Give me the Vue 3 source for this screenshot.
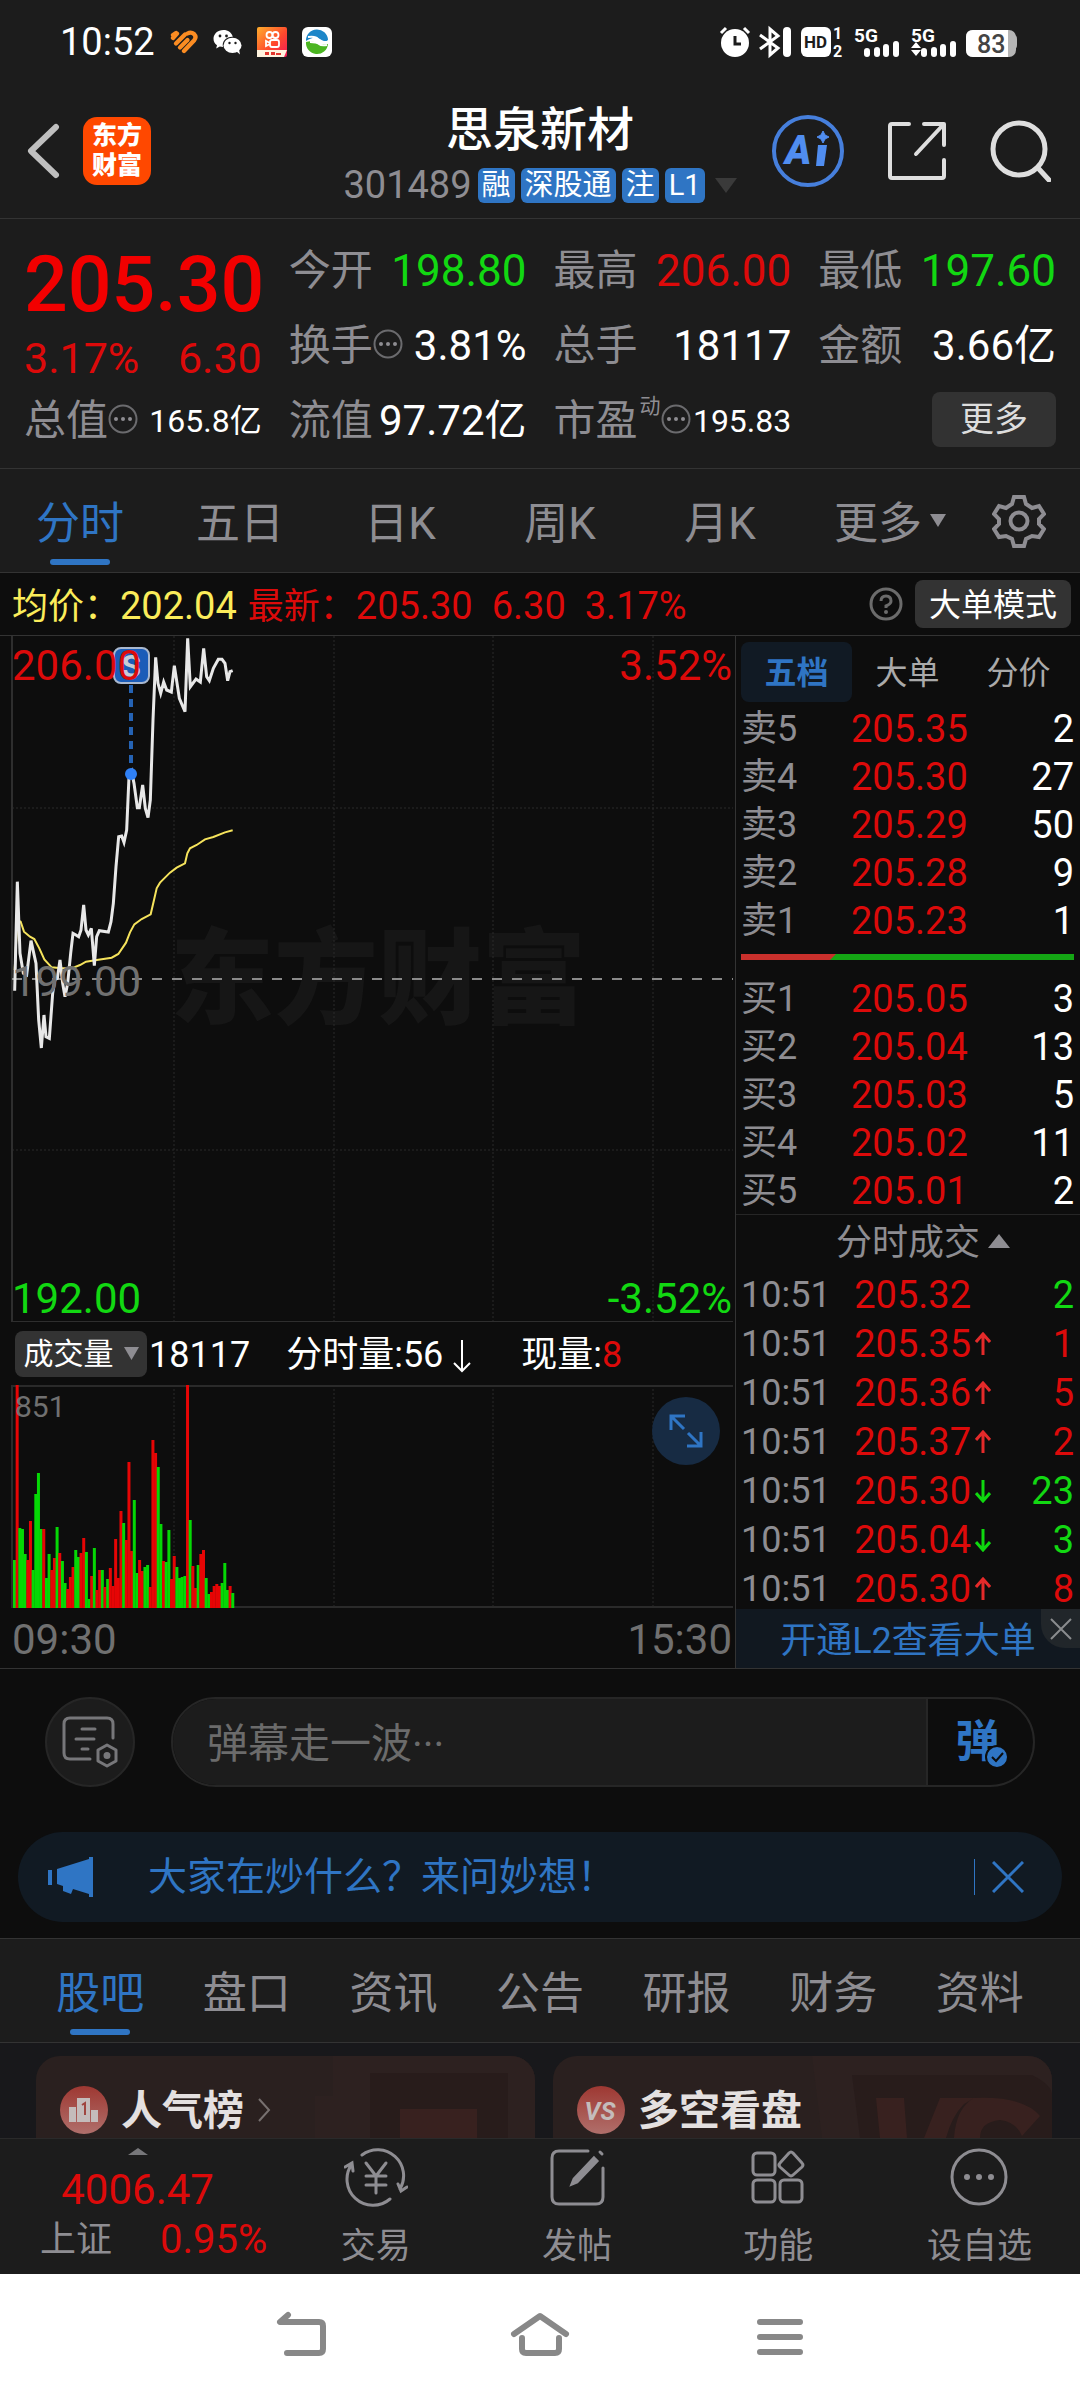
<template>
  <div class="page">
    <header class="top">
      <div class="status">
        <div class="status-left">
          <span class="clock">10:52</span>
          <svg width="28" height="24" viewBox="0 0 28 24" fill="none" stroke="#fb8c22" stroke-width="4.300" stroke-linecap="round" stroke-linejoin="round">
            <path d="M3 8 7 3.500M3 5 6 3" />
            <path d="M6 13.500 15 4.500" />
            <path d="M10 17.500 17.500 10" />
            <path d="M14 21 24 10.500Q27 7 24 4Q21 1.500 17.500 3.500" />
          </svg>
          <svg width="29" height="26" viewBox="0 0 29 26">
            <path fill="#fff" d="M10.500 1C4.500 1 .5 5 .5 9.800c0 2.700 1.300 5 3.500 6.500l-.8 3.200 3.600-1.900c1 .3 2.200.4 3.200.4-1.500-6 3.500-10.600 9.800-10.300C18.700 3.600 15 1 10.500 1Z" />
            <ellipse cx="19.500" cy="16.400" rx="9" ry="7.700" fill="#fff" />
            <path fill="#fff" d="m23 22 4 3.500-1-5Z" />
            <g fill="#1c1c1c"><circle cx="7" cy="7" r="1.400" /><circle cx="13.500" cy="7" r="1.400" /><circle cx="16.500" cy="14" r="1.200" /><circle cx="22.500" cy="14" r="1.200" /></g>
          </svg>
          <svg width="30" height="30" viewBox="0 0 30 30">
            <defs>
              <linearGradient id="ks" x1="0" y1="0" x2="1" y2="1"><stop offset="0" stop-color="#ffae2c" /><stop offset=".55" stop-color="#ff4a2d" /><stop offset="1" stop-color="#f41858" /></linearGradient>
            </defs>
            <rect width="30" height="30" rx="2" fill="url(#ks)" />
            <g fill="none" stroke="#fff" stroke-width="1.800"><circle cx="12.500" cy="8" r="3" /><circle cx="18.500" cy="8" r="3" /><rect x="13" y="13" width="9" height="7" rx="2" /><path d="m13 16-4-2v5l4-2" /></g>
            <path d="M0 23h30l-3 7H0Z" fill="#fff3df" />
            <path d="M8 25h4v3H8Zm6 0h4v3h-4Zm5 1h5v2h-5Z" fill="#e2372e" />
          </svg>
          <svg width="30" height="30" viewBox="0 0 30 30">
            <rect width="30" height="30" rx="6" fill="#fff" />
            <path d="M4 14a11 11 0 0 1 22-1q-3 3-8-1t-14 2Z" fill="#1c86c8" />
            <path d="M4 15q6-2 10 1t12 1A11 11 0 0 1 4 15Z" fill="#4bb521" />
            <path d="M6 10q8-1 10 2t9 3M8 15q7 0 9 2t8 1" fill="none" stroke="#fff" stroke-width="1.800" />
          </svg>
        </div>
        <svg class="status-right" width="300" height="32" viewBox="0 0 300 32">
          <g fill="#fff">
            <circle cx="15" cy="17" r="14" />
            <path d="m1 7 5-5M29 7l-5-5" stroke="#fff" stroke-width="3" />
            <path d="M15 10v8h6" stroke="#1c1c1c" stroke-width="3" fill="none" />
            <path d="m40 9 18 13-8 7V3l8 7-18 13" fill="none" stroke="#fff" stroke-width="3" />
            <rect x="63" y="1" width="8" height="30" rx="4" />
            <rect x="81" y="1" width="30" height="30" rx="6" />
            <text x="84" y="22" class="hd">HD</text>
            <text x="113" y="13" class="tiny">1</text>
            <text x="113" y="31" class="tiny">2</text>
            <text x="134" y="16" class="net">5G</text>
            <text x="191" y="16" class="net">5G</text>
            <g v-for="x in [144, 201]" :key="x">
              <rect :x="x" y="22" width="6" height="9" rx="3" />
              <rect :x="x + 10" y="21" width="6" height="10" rx="3" />
              <rect :x="x + 19" y="18" width="6" height="13" rx="3" />
              <rect :x="x + 29" y="15" width="6" height="16" rx="3" />
            </g>
            <path d="m191 22 5-6 5 6Zm0 2 5 6 5-6Z" />
          </g>
          <path d="M289 9h5q3 0 3 4v6q0 4-3 4h-5Z" fill="#b5b5b5" />
          <rect x="246" y="4" width="50" height="27" rx="7" fill="#b5b5b5" />
          <path d="M253 4h35v27h-35q-7 0-7-7V11q0-7 7-7Z" fill="#fff" />
          <text x="257" y="27" class="batt">83</text>
        </svg>
      </div>

      <div class="head">
        <div class="head-side">
          <button class="icon-btn" aria-label="返回">
            <svg width="34" height="58" viewBox="0 0 34 58"><path d="M30 5 5 29l25 24" fill="none" stroke="#bfbfbf" stroke-width="6" stroke-linecap="round" stroke-linejoin="round" /></svg>
          </button>
          <div class="logo">东方<br>财富</div>
        </div>
        <div class="head-title">
          <h1>思泉新材</h1>
          <div class="code">
            <span class="code-num">301489</span>
            <span v-for="t in tags" :key="t" class="tag">{{ t }}</span>
            <svg class="code-arrow" width="22" height="15" viewBox="0 0 22 15"><path d="M0 0h22L11 15Z" fill="#3a3a3a" /></svg>
          </div>
        </div>
        <div class="head-side right">
          <button class="icon-btn" aria-label="AI">
            <svg width="74" height="74" viewBox="0 0 74 74">
              <circle cx="37" cy="37" r="34" fill="none" stroke="#467fdc" stroke-width="4" />
              <text x="14" y="50" class="ai">A</text>
              <path d="M47 31h9l-3 21h-8Z" fill="#508df0" />
              <path d="m52 17 2 4 4 2-4 2-2 4-2-4-4-2 4-2Z" fill="#508df0" stroke="#508df0" />
            </svg>
          </button>
          <button class="icon-btn" aria-label="分享">
            <svg width="60" height="60" viewBox="0 0 60 60" fill="none" stroke="#dedede" stroke-width="4" stroke-linecap="round" stroke-linejoin="round">
              <path d="M22 3H5Q3 3 3 5v50q0 2 2 2h50q2 0 2-2V39M37 3h20v21M56 4 29 33" />
            </svg>
          </button>
          <button class="icon-btn" aria-label="搜索">
            <svg width="62" height="62" viewBox="0 0 62 62" fill="none" stroke="#dedede" stroke-width="5" stroke-linecap="round">
              <circle cx="30" cy="29" r="26" /><path d="m49 48 11 12" />
            </svg>
          </button>
        </div>
      </div>
    </header>

    <section class="quote">
      <div class="q-main">
        <strong>205.30</strong>
        <div class="q-change"><span>3.17%</span><span>6.30</span></div>
      </div>
      <div v-for="q in quotes" :key="q.label" class="q-item">
        <span class="q-label">{{ q.label }}<sup v-if="q.sup">{{ q.sup }}</sup></span>
        <svg v-if="q.info" class="q-info" width="30" height="30" viewBox="0 0 30 30">
          <circle cx="15" cy="15" r="13.500" fill="none" stroke="#6b6b6e" stroke-width="2" />
          <g fill="#8e8d92"><circle cx="8" cy="15" r="2" /><circle cx="15" cy="15" r="2" /><circle cx="22" cy="15" r="2" /></g>
        </svg>
        <span class="q-value" :class="[q.color, q.size]">{{ q.value }}</span>
      </div>
      <div class="q-item end"><button class="more">更多</button></div>
    </section>

    <nav class="periods">
      <button v-for="(p, i) in periods" :key="p" class="tab" :class="{ active: i === 0 }">
        {{ p }}<svg v-if="p === '更多'" class="tab-arrow" width="16" height="13" viewBox="0 0 16 13"><path d="M0 0h16L8 13Z" fill="#8e8d92" /></svg>
      </button>
      <button class="gear" aria-label="设置">
        <svg width="54" height="54" viewBox="0 0 54 54" fill="none" stroke="#8e8d92" stroke-width="4">
          <circle cx="27" cy="27" r="8.500" />
          <path d="M22 3h10l2 7 6 4 7-2 5 8-5 5v5l5 5-5 8-7-1-6 3-2 7H22l-2-7-6-3-7 1-5-8 5-5v-5l-5-5 5-8 7 2 6-4Z" />
        </svg>
      </button>
    </nav>

    <section class="legend">
      <span class="avg">均价：<b>202.04</b></span>
      <span class="last">最新：<b>205.30</b></span>
      <b class="last">6.30</b>
      <b class="last">3.17%</b>
      <svg class="help" width="34" height="34" viewBox="0 0 34 34">
        <circle cx="17" cy="17" r="15" fill="none" stroke="#6b6b6b" stroke-width="3" />
        <path d="M12 14q0-5 5-5t5 5q0 3-5 5v2" fill="none" stroke="#6b6b6b" stroke-width="3" />
        <circle cx="17" cy="25" r="2" fill="#6b6b6b" />
      </svg>
      <button class="big-mode">大单模式</button>
    </section>

    <main class="board">
      <div class="charts">
        <div class="price">
          <svg viewBox="0 0 735 686">
            <text x="170" y="380" class="watermark">东方财富</text>
            <g stroke="#2a2a2a" stroke-dasharray="2 2">
              <path v-for="x in gridX" :key="x" :d="`M${x} 0V686`" />
              <path d="M12 172H733M12 514H733" />
            </g>
            <path d="M12 0V686H733" fill="none" stroke="#2e2e2e" stroke-width="2" />
            <path d="M12 343H733" stroke="#8a8a8a" stroke-width="2" stroke-dasharray="10 10" />
            <polyline :points="avgLine" fill="none" stroke="#f5e35c" stroke-width="2" />
            <polyline :points="priceLine" fill="none" stroke="#e8e8e8" stroke-width="3" />
            <path d="M131 49V133" stroke="#2563b4" stroke-width="4" stroke-dasharray="8 6" />
            <circle cx="131" cy="138" r="6" fill="#2f80f5" />
            <rect x="114" y="12" width="35" height="35" rx="7" fill="#1b5cb8" stroke="#a9b8cf" stroke-width="2" />
            <text x="131" y="41" class="s-mark">S</text>
          </svg>
          <span class="mark tl red">206.00</span>
          <span class="mark tr red">3.52%</span>
          <span class="mark ml">199.00</span>
          <span class="mark bl green">192.00</span>
          <span class="mark br green">-3.52%</span>
        </div>
        <div class="vol-head">
          <button class="vol-select">成交量<svg width="15" height="13" viewBox="0 0 15 13"><path d="M0 0h15L7.500 13Z" fill="#8e8d92" /></svg></button>
          <span class="vol-total">18117</span>
          <span class="vol-min">分时量:56<svg width="18" height="34" viewBox="0 0 18 34"><path d="M9 1v31M1 24l8 8 8-8" fill="none" stroke="#fff" stroke-width="2" /></svg></span>
          <span>现量:<i class="red">8</i></span>
        </div>
        <div class="volume">
          <svg viewBox="0 0 735 223">
            <path v-for="x in gridX" :key="x" :d="`M${x} 0V223`" stroke="#2a2a2a" stroke-dasharray="2 2" />
            <path d="M733 1H12V222H733" fill="none" stroke="#2a2a2a" stroke-width="2" />
            <rect v-for="(b, i) in bars" :key="i" :x="b.x" :y="b.y" width="3" :height="b.h" :fill="b.fill" />
          </svg>
          <span class="vol-max">851</span>
          <button class="expand" aria-label="全屏">
            <svg width="36" height="36" viewBox="0 0 36 36" fill="none" stroke="#2f75c4" stroke-width="3"><path d="M3 17V3h14M3 3l13 13M33 19v14H19M33 33 20 20" /></svg>
          </button>
        </div>
        <div class="axis"><span>09:30</span><span>15:30</span></div>
      </div>

      <aside class="side">
        <div class="side-tabs">
          <button class="active">五档</button><button>大单</button><button>分价</button>
        </div>
        <table class="depth">
          <tbody>
            <tr v-for="r in sells" :key="r[0]"><td>{{ r[0] }}</td><td>{{ r[1] }}</td><td>{{ r[2] }}</td></tr>
          </tbody>
        </table>
        <svg class="ratio" viewBox="0 0 333 6" preserveAspectRatio="none"><path d="M0 0h333v6H0Z" fill="#14a614" /><path d="M0 0h95l-6 6H0Z" fill="#c9302c" /></svg>
        <table class="depth">
          <tbody>
            <tr v-for="r in buys" :key="r[0]"><td>{{ r[0] }}</td><td>{{ r[1] }}</td><td>{{ r[2] }}</td></tr>
          </tbody>
        </table>
        <button class="deals-title">分时成交<svg width="22" height="14" viewBox="0 0 22 14"><path d="M11 0 22 14H0Z" fill="#8e8d92" /></svg></button>
        <table class="deals">
          <tbody>
            <tr v-for="(d, i) in deals" :key="i">
              <td>10:51</td>
              <td>{{ d.price }}</td>
              <td class="dir">
                <svg v-if="d.dir" width="16" height="24" viewBox="0 0 16 24" fill="none" stroke-width="3">
                  <path v-if="d.dir === 'up'" d="M8 23V3M1 10l7-8 7 8" stroke="#e52a2a" />
                  <path v-else d="M8 1v20M1 14l7 8 7-8" stroke="#0fd80f" />
                </svg>
              </td>
              <td :class="d.color">{{ d.qty }}</td>
            </tr>
          </tbody>
        </table>
        <div class="promo">
          <a href="#">开通L2查看大单</a>
          <button class="promo-close" aria-label="关闭"><svg width="22" height="22" viewBox="0 0 22 22"><path d="m1 1 20 20M21 1 1 21" stroke="#8a8c8e" stroke-width="2" /></svg></button>
        </div>
      </aside>
    </main>

    <section class="chat">
      <button class="round" aria-label="弹幕设置">
        <svg width="56" height="52" viewBox="0 0 56 52" fill="none" stroke="#77777a" stroke-width="3" stroke-linecap="round">
          <path d="M51 22V8q0-6-6-6H8Q2 2 2 8v29q0 6 6 6h20M20 13h13M14 23h18M20 33h6" />
          <path d="m45 29 9 5v11l-9 5-9-5V34Z" stroke-linejoin="round" />
          <circle cx="45" cy="39.500" r="2" fill="#77777a" />
        </svg>
      </button>
      <div class="danmu">
        <input type="text" placeholder="弹幕走一波···" aria-label="弹幕">
        <button class="danmu-switch">弹<svg class="check" width="24" height="24" viewBox="0 0 24 24"><circle cx="12" cy="12" r="11" fill="#2f75c4" stroke="#0d0d0d" stroke-width="2" /><path d="m7 12 4 4 7-8" fill="none" stroke="#0d0d0d" stroke-width="2" /></svg></button>
      </div>
    </section>

    <section class="banner">
      <svg width="46" height="40" viewBox="0 0 46 40" fill="#2f75c4"><path d="M0 13h4v15H0ZM9 12 41 2V0h4v40h-4v-3l-16-5-2 5-8-3v-5l-6-2Z" /></svg>
      <a href="#">大家在炒什么？来问妙想！</a>
      <button class="banner-close" aria-label="关闭"><svg width="32" height="32" viewBox="0 0 32 32"><path d="m1 1 30 30M31 1 1 31" stroke="#2f75c4" stroke-width="3" /></svg></button>
    </section>

    <nav class="sections">
      <button v-for="(s, i) in sections" :key="s" class="tab" :class="{ active: i === 0 }">{{ s }}</button>
    </nav>

    <section class="cards">
      <article class="card">
        <svg class="card-bg" width="220" height="82" viewBox="0 0 220 82"><path d="M18 0h202v82H0V40h18Z" fill="#2d2120" /><path d="M55 17h138v65H55Z" fill="#281c1b" /><path d="M85 53h77v29H85Z" fill="#38211f" /></svg>
        <svg width="48" height="48" viewBox="0 0 48 48">
          <defs><linearGradient id="badge" x1="0" y1="0" x2="0" y2="1"><stop offset="0" stop-color="#9e3832" /><stop offset="1" stop-color="#b06f6b" /></linearGradient></defs>
          <circle cx="24" cy="24" r="24" fill="url(#badge)" />
          <path d="M9 21h7v15H9Zm8-9h13v24H17Zm14 12h7v12h-7Z" fill="#c4bcbb" />
          <path d="m22 19 3-2v12" fill="none" stroke="#a04640" stroke-width="2" />
        </svg>
        <h2>人气榜</h2>
        <svg class="card-arrow" width="14" height="24" viewBox="0 0 14 24"><path d="m2 1 10 11L2 23" fill="none" stroke="#77706f" stroke-width="2" /></svg>
      </article>
      <article class="card">
        <svg class="card-bg" width="240" height="82" viewBox="0 0 240 82"><path d="M0 0h240v82H10Z" fill="#2d2120" /><path d="M40 19h180q20 10 20 20v43H48Z" fill="#281c1b" /><path d="M64 42h28l3 40H68ZM128 42h34l-10 6q-12 12-18 34h-22Zm34 0q50-2 66 18l-18 20q-6-14-22-16-20 2-20 18h-26q2-30 20-40Z" fill="#38211f" /></svg>
        <svg width="48" height="48" viewBox="0 0 48 48"><circle cx="24" cy="24" r="24" fill="url(#badge)" /><text x="23" y="34" class="vs">VS</text></svg>
        <h2>多空看盘</h2>
      </article>
    </section>

    <footer class="bottom">
      <div class="index">
        <svg width="20" height="7" viewBox="0 0 20 7"><path d="M10 0 20 7H0Z" fill="#77777a" /></svg>
        <span class="index-num">4006.47</span>
        <div class="index-row"><span>上证</span><b>0.95%</b></div>
      </div>
      <button class="tool">
        <svg width="64" height="60" viewBox="0 0 64 60">
          <path d="M18 8A26 26 0 0 1 56 42M46 52A26 26 0 0 1 8 17M1 20l7-4 1 8M63 40l-6 4-3-7" />
          <path d="m22 16 10 13 10-13M32 29v17M22 29h20M22 38h20" />
        </svg>交易
      </button>
      <button class="tool">
        <svg width="64" height="60" viewBox="0 0 64 60">
          <path d="M43 4H14Q7 4 7 11v39q0 7 7 7h37q7 0 7-7V21" />
          <path d="m49 11 3 3-20 21-5 2 2-5ZM55 5l2 2" fill="#8e8d92" />
        </svg>发帖
      </button>
      <button class="tool">
        <svg width="64" height="60" viewBox="0 0 64 60">
          <rect x="7" y="6" width="22" height="22" rx="4" /><rect x="7" y="33" width="22" height="22" rx="4" /><rect x="34" y="33" width="22" height="22" rx="4" />
          <path d="M43 6q2-2 4 0l9 10q2 2 0 4l-9 8q-2 2-4 0l-9-8q-2-2 0-4Z" />
        </svg>功能
      </button>
      <button class="tool">
        <svg width="64" height="60" viewBox="0 0 64 60">
          <circle cx="32" cy="30" r="27" />
          <g fill="#8e8d92" stroke="none"><circle cx="20" cy="30" r="3" /><circle cx="32" cy="30" r="3" /><circle cx="44" cy="30" r="3" /></g>
        </svg>设自选
      </button>
    </footer>

    <nav class="sysnav">
      <button aria-label="后退"><svg width="60" height="48" viewBox="0 0 60 48"><path d="M18 4 10 11h39q4 0 4 4v23q0 4-4 4H17" /></svg></button>
      <button aria-label="主页"><svg width="60" height="48" viewBox="0 0 60 48"><path d="M4 23 30 5l26 18M12 27v11q0 4 4 4h29q4 0 4-4V27" /></svg></button>
      <button aria-label="多任务"><svg width="60" height="48" viewBox="0 0 60 48"><path d="M10 11h40M10 26h40M10 41h40" /></svg></button>
    </nav>
  </div>
</template>

<script setup>
const tags = ['融', '深股通', '注', 'L1']
const periods = ['分时', '五日', '日K', '周K', '月K', '更多']
const sections = ['股吧', '盘口', '资讯', '公告', '研报', '财务', '资料']

const quotes = [
  { label: '今开', value: '198.80', color: 'green', size: 'lg' },
  { label: '最高', value: '206.00', color: 'red', size: 'lg' },
  { label: '最低', value: '197.60', color: 'green', size: 'lg' },
  { label: '换手', value: '3.81%', info: true },
  { label: '总手', value: '18117' },
  { label: '金额', value: '3.66亿' },
  { label: '总值', value: '165.8亿', info: true, size: 'sm' },
  { label: '流值', value: '97.72亿' },
  { label: '市盈', value: '195.83', sup: '动', info: true, size: 'sm' },
]

const sells = [['卖5', '205.35', 2], ['卖4', '205.30', 27], ['卖3', '205.29', 50], ['卖2', '205.28', 9], ['卖1', '205.23', 1]]
const buys = [['买1', '205.05', 3], ['买2', '205.04', 13], ['买3', '205.03', 5], ['买4', '205.02', 11], ['买5', '205.01', 2]]
const deals = [
  { price: '205.32', qty: 2, color: 'green' },
  { price: '205.35', qty: 1, color: 'red', dir: 'up' },
  { price: '205.36', qty: 5, color: 'red', dir: 'up' },
  { price: '205.37', qty: 2, color: 'red', dir: 'up' },
  { price: '205.30', qty: 23, color: 'green', dir: 'down' },
  { price: '205.04', qty: 3, color: 'green', dir: 'down' },
  { price: '205.30', qty: 8, color: 'red', dir: 'up' },
]

const gridX = [174, 334, 493, 653]

// points are kept at three times the chart's own units
const toLine = (pts) => pts.map(([x, y]) => `${x / 3},${(y - 48) / 3}`).join(' ')

const priceLine = toLine([
  [44, 1112], [52, 785], [60, 1000], [70, 1060], [80, 1065], [93, 962], [108, 1030], [116, 1200], [124, 1284],
  [132, 1185], [138, 1250], [148, 1255], [158, 1120], [165, 1078], [172, 1075], [180, 1020], [188, 1090], [195, 1130],
  [203, 1090], [212, 1000], [219, 940], [228, 945], [236, 950], [243, 930], [251, 855], [258, 930], [265, 945],
  [274, 925], [283, 1037], [290, 950], [298, 932], [325, 936], [333, 905], [340, 850], [348, 740], [356, 650],
  [365, 648], [372, 667], [380, 630], [387, 470], [395, 455], [402, 490], [412, 563], [418, 563], [428, 495],
  [436, 565], [444, 593], [451, 540], [459, 300], [467, 112], [474, 190], [482, 220], [491, 186], [500, 210],
  [514, 216], [523, 137], [538, 235], [555, 275], [563, 55], [571, 200], [588, 177], [601, 186], [611, 85],
  [620, 170], [628, 182], [640, 145], [655, 118], [666, 118], [675, 130], [683, 182], [690, 155], [698, 152],
])
const avgLine = toLine([
  [44, 1050], [52, 900], [62, 905], [72, 935], [90, 950], [103, 957], [118, 985], [133, 1018], [155, 1042],
  [185, 1045], [215, 1045], [240, 1035], [258, 1025], [290, 1020], [335, 1013], [355, 1002], [378, 968],
  [390, 937], [403, 913], [425, 897], [452, 883], [462, 840], [470, 805], [480, 788], [510, 758], [530, 743],
  [555, 730], [562, 700], [570, 685], [590, 675], [615, 658], [640, 651], [675, 637], [698, 631],
])

const volumes =
  'g48 r223 g80 g79 g54 r48 r87 g38 g114 g135 g79 r79 g30 g54 r38 r50 g81 r55 g47 g25 r19 r31 r41 g58 g51 r55 r70 g56 g9 r32 g60 ' +
  'r18 r38 g38 r21 g29 r40 r22 r69 r30 r97 g85 r68 r146 r57 g108 g35 r48 r37 g41 g43 r21 r168 r155 g141 g84 r47 g46 g78 ' +
  'r29 r52 g41 g30 g31 g32 r223 g88 r42 r20 g43 r54 r58 g30 g14 r16 r22 r24 r22 g25 g45 g18 r22 g15'
const bars = volumes.split(' ').map((v, i) => {
  const h = Number(v.slice(1))
  return { x: 13 + i * 2.662, y: 223 - h, h, fill: v[0] === 'r' ? '#e60505' : '#05d805' }
})
</script>

<style>
body {
  margin: 0;
  background: #0d0d0d;
}
</style>

<style scoped>
.page {
  font-family: Roboto, "Noto Sans CJK SC", sans-serif;
  font-size: 36px;
  line-height: 1.2;
  color: #fff;
  background: #0d0d0d;
}
svg {
  display: block;
  flex: none;
}
button {
  display: flex;
  align-items: center;
  justify-content: center;
  padding: 0;
  border: 0;
  background: none;
  color: inherit;
  font: inherit;
  white-space: nowrap;
}
a {
  color: #2f75c4;
  text-decoration: none;
}
b, i {
  font-weight: 400;
  font-style: normal;
}
.red { color: #dc0a0a; }
.green { color: #12d812; }

/* status bar and header */
.top {
  background: #1c1c1c;
  border-bottom: 1px solid #333;
}
.status {
  display: flex;
  align-items: center;
  justify-content: space-between;
  height: 84px;
  padding: 0 60px;
}
.status-left {
  display: flex;
  align-items: center;
  gap: 15px;
}
.status-right { overflow: visible; }
.clock { font-size: 38px; padding-top: 2px; }
.hd { font: 700 17px Roboto, sans-serif; fill: #1c1c1c; }
.tiny { font: 700 16px Roboto, sans-serif; }
.net { font: 700 19px Roboto, sans-serif; }
.batt { font: 500 25px Roboto, sans-serif; fill: #444; }
.head {
  display: grid;
  grid-template-columns: 1fr auto 1fr;
  align-items: center;
  height: 134px;
}
.head-side {
  display: flex;
  align-items: center;
  gap: 23px;
  padding-left: 26px;
}
.head-side.right {
  justify-content: flex-end;
  gap: 42px;
  padding: 0 29px 0 0;
}
.logo {
  width: 68px;
  height: 68px;
  box-sizing: border-box;
  padding-top: 4px;
  border-radius: 14px;
  background: #ff4800;
  font-size: 25px;
  font-weight: 900;
  line-height: 30px;
  text-align: center;
}
.head-title {
  display: flex;
  flex-direction: column;
  align-items: center;
  padding-top: 9px;
}
h1 {
  margin: 0;
  font-size: 47px;
  font-weight: 500;
  line-height: 60px;
}
.code {
  display: flex;
  align-items: center;
  gap: 6px;
  height: 52px;
  color: #8e8d92;
  font-size: 38px;
}
.tag {
  height: 35px;
  padding: 0 4px;
  border-radius: 6px;
  background: #2f75c4;
  color: #fff;
  font-size: 29px;
  line-height: 35px;
}
.code-arrow { margin-left: 4px; }
.ai {
  font: italic 900 40px Roboto, sans-serif;
  fill: #508df0;
}

/* quote */
.quote {
  display: grid;
  grid-template-columns: repeat(4, minmax(0, 1fr));
  grid-auto-rows: 75px;
  column-gap: 27px;
  padding: 15px 24px 9px;
  background: #1c1c1c;
  border-bottom: 1px solid #333;
}
.q-main {
  grid-row: span 2;
  color: #dc0a0a;
}
.q-main strong {
  display: block;
  padding-top: 4px;
  color: #f20000;
  font-size: 77px;
  font-weight: 500;
  line-height: 94px;
}
.q-change {
  display: flex;
  justify-content: space-between;
  font-size: 43px;
  line-height: 52px;
}
.q-item {
  display: flex;
  align-items: center;
  min-width: 0;
  white-space: nowrap;
}
.q-item.end { justify-content: flex-end; }
.q-label {
  display: flex;
  color: #8e8d92;
  font-size: 42px;
}
.q-info { margin-bottom: 6px; }
sup {
  margin-left: 2px;
  font-size: 21px;
  line-height: 1;
}
.q-value {
  margin-left: auto;
  font-size: 42px;
}
.q-value.lg { font-size: 44px; }
.q-value.sm { font-size: 32px; }
.more {
  width: 124px;
  height: 55px;
  margin-bottom: 4px;
  border-radius: 8px;
  background: #323232;
  color: #ddd;
  font-size: 34px;
}

/* tabs */
.periods, .sections {
  display: flex;
  height: 103px;
  background: #1c1c1c;
  border-bottom: 1px solid #333;
}
.periods {
  display: grid;
  grid-template-columns: repeat(5, 8fr) 9fr 5fr;
}
.tab {
  position: relative;
  flex: 1;
  padding-top: 7px;
  color: #8e8d92;
  font-size: 44px;
}
.tab.active { color: #2f75c4; }
.tab.active::after {
  content: "";
  position: absolute;
  left: 50%;
  bottom: 7px;
  width: 60px;
  height: 6px;
  margin-left: -30px;
  border-radius: 3px;
  background: #2f75c4;
}
.tab-arrow { margin: 0 0 8px 8px; }
.gear { padding-right: 22px; }

/* legend */
.legend {
  display: flex;
  align-items: center;
  height: 62px;
  padding: 0 9px 0 12px;
  border-bottom: 1px solid #333;
}
.legend b { font-size: 38px; }
.legend .avg, .legend .last { padding-top: 5px; }
.avg { color: #fbec5a; margin-right: 11px; }
.last { color: #dc0a0a; margin-right: 19px; }
.help { margin: 0 12px 0 auto; }
.big-mode {
  width: 156px;
  height: 48px;
  padding-top: 2px;
  border-radius: 8px;
  background: #333;
  font-size: 32px;
}

/* charts */
.board {
  display: grid;
  grid-template-columns: 735fr 345fr;
  border-bottom: 1px solid #333;
}
.charts {
  display: flex;
  flex-direction: column;
  min-width: 0;
}
.price, .volume { position: relative; }
.price > svg, .volume > svg { width: 100%; }
.watermark {
  font: 900 104px "Noto Sans CJK SC", sans-serif;
  fill: #161616;
}
.s-mark {
  font: 700 32px Roboto, sans-serif;
  fill: #c5ccd6;
  text-anchor: middle;
}
.mark {
  position: absolute;
  font-size: 42px;
  line-height: 50px;
  color: #707070;
}
.mark.red { color: #dc0a0a; }
.mark.green { color: #12d812; }
.tl { top: 5px; left: 12px; }
.tr { top: 5px; right: 3px; }
.ml { top: 50%; left: 12px; margin-top: -22px; }
.bl { bottom: -2px; left: 12px; }
.br { bottom: -2px; right: 3px; }
.vol-head {
  display: flex;
  align-items: center;
  height: 63px;
  padding-left: 15px;
  white-space: nowrap;
}
.vol-head > span { padding-top: 5px; }
.vol-select {
  gap: 10px;
  width: 132px;
  height: 46px;
  border-radius: 8px;
  background: #333;
  font-size: 30px;
}
.vol-total { margin: 0 36px 0 2px; }
.vol-min {
  display: flex;
  align-items: center;
  gap: 10px;
  margin-right: 50px;
}
.vol-max {
  position: absolute;
  top: 4px;
  left: 15px;
  color: #707070;
  font-size: 30px;
}
.expand {
  position: absolute;
  top: 12px;
  right: 15px;
  width: 68px;
  height: 68px;
  border-radius: 50%;
  background: #172b43;
}
.axis {
  display: flex;
  flex: 1;
  align-items: center;
  justify-content: space-between;
  padding: 4px 3px 0 12px;
  color: #707070;
  font-size: 42px;
}

/* order book */
.side {
  border-left: 1px solid #333;
}
.side-tabs {
  display: flex;
  height: 60px;
  padding: 6px 6px 2px 5px;
}
.side-tabs button {
  flex: 1;
  padding-top: 3px;
  border-radius: 8px;
  color: #aaa;
  font-size: 32px;
}
.side-tabs .active {
  background: #111a24;
  color: #2f75c4;
  font-weight: 700;
}
table {
  width: 100%;
  border-collapse: collapse;
  table-layout: fixed;
}
td {
  padding: 0;
  height: 48px;
  line-height: 44px;
  white-space: nowrap;
}
.depth td {
  height: 46px;
  padding-top: 2px;
}
td:first-child {
  width: 110px;
  padding-left: 5px;
  color: #8e8d92;
}
td:nth-child(2) {
  width: 120px;
  color: #dc0a0a;
  font-size: 38px;
}
td:last-child {
  padding-right: 6px;
  font-size: 38px;
  text-align: right;
}
.ratio {
  width: calc(100% - 11px);
  height: 6px;
  margin: 10px 5px 14px;
}
.deals-title {
  gap: 8px;
  width: 100%;
  height: 56px;
  padding: 3px 0 0 30px;
  border-top: 1px solid #262626;
  color: #8e8d92;
}
.deals-title svg { margin-bottom: 6px; }
.deals td { height: 49px; }
.deals td:nth-child(2) { text-align: right; }
.deals td.dir {
  width: 24px;
  padding-left: 4px;
}
.deals td.red { color: #dc0a0a; }
.deals td.green { color: #12d812; }
.deals td:first-child { width: 110px; }
.promo {
  position: relative;
  display: flex;
  align-items: center;
  justify-content: center;
  box-sizing: border-box;
  height: 59px;
  margin-top: -4px;
  padding-top: 6px;
  background: #111820;
}
.promo-close {
  position: absolute;
  top: 0;
  right: 0;
  width: 39px;
  height: 39px;
  border-bottom-left-radius: 24px;
  background: #21262a;
}

/* comment bar */
.chat {
  display: flex;
  gap: 36px;
  padding: 28px 45px 45px;
}
.round {
  width: 90px;
  height: 90px;
  border: 2px solid #262626;
  border-radius: 50%;
  background: #1c1c1c;
}
.danmu {
  display: flex;
  flex: 1;
  box-sizing: border-box;
  height: 90px;
  border: 2px solid #262626;
  border-radius: 45px;
  overflow: hidden;
}
input {
  flex: 1;
  min-width: 0;
  padding: 4px 34px 0;
  border: 0;
  border-right: 2px solid #262626;
  background: #1c1c1c;
  color: #fff;
  font: 41px Roboto, "Noto Sans CJK SC", sans-serif;
}
input::placeholder { color: #6b6b6b; }
.danmu-switch {
  position: relative;
  width: 105px;
  padding-right: 6px;
  color: #2f75c4;
  font-size: 44px;
  font-weight: 700;
}
.check {
  position: absolute;
  right: 24px;
  bottom: 16px;
}
.banner {
  display: flex;
  align-items: center;
  gap: 54px;
  height: 90px;
  margin: 0 18px 16px;
  padding: 0 38px 0 30px;
  border-radius: 45px;
  background: #111a23;
  font-size: 39px;
}
.banner-close {
  height: 36px;
  margin-left: auto;
  padding-left: 17px;
  border-left: 1px solid #2f75c4;
}
.sections {
  padding: 0 27px;
  border-top: 1px solid #333;
}

/* cards */
.cards {
  display: grid;
  grid-template-columns: 1fr 1fr;
  gap: 18px;
  height: 82px;
  padding: 13px 28px 0 36px;
  background: #18181b;
}
.card {
  position: relative;
  display: flex;
  gap: 13px;
  padding: 30px 24px 0;
  border-radius: 24px 24px 0 0;
  background: #2a201f;
  overflow: hidden;
}
.card > * { position: relative; }
.card .card-bg {
  position: absolute;
  top: 0;
  right: 0;
}
h2 {
  margin: 0;
  color: #e4e0e0;
  font-size: 41px;
  font-weight: 700;
  line-height: 50px;
}
.card-arrow { margin-top: 12px; }
.vs {
  font: italic 700 25px Roboto, sans-serif;
  fill: #c4bcbb;
  text-anchor: middle;
}

/* bottom bar */
.bottom {
  display: grid;
  grid-template-columns: 275fr repeat(4, 201fr);
  height: 135px;
  background: #1c1c1c;
  border-top: 1px solid #2a2a2a;
}
.index {
  display: flex;
  flex-direction: column;
  align-items: center;
  padding-top: 9px;
  color: #dc0a0a;
}
.index-num {
  margin-top: 10px;
  font-size: 42px;
  line-height: 50px;
}
.index-row {
  display: flex;
  align-items: center;
  gap: 48px;
  padding-left: 32px;
  line-height: 50px;
}
.index-row span { color: #8e8d92; }
.index-row b { font-size: 40px; }
.tool {
  flex-direction: column;
  justify-content: flex-start;
  gap: 19px;
  padding-top: 8px;
  color: #8e8d92;
  font-size: 35px;
}
.tool svg, .sysnav svg {
  fill: none;
  stroke: #8e8d92;
  stroke-width: 3;
  stroke-linecap: round;
}
.sysnav {
  display: flex;
  justify-content: center;
  gap: 180px;
  box-sizing: border-box;
  height: 126px;
  padding-bottom: 4px;
  background: #fff;
}
.sysnav svg {
  stroke: #888;
  stroke-width: 6;
  stroke-linejoin: round;
}
</style>
